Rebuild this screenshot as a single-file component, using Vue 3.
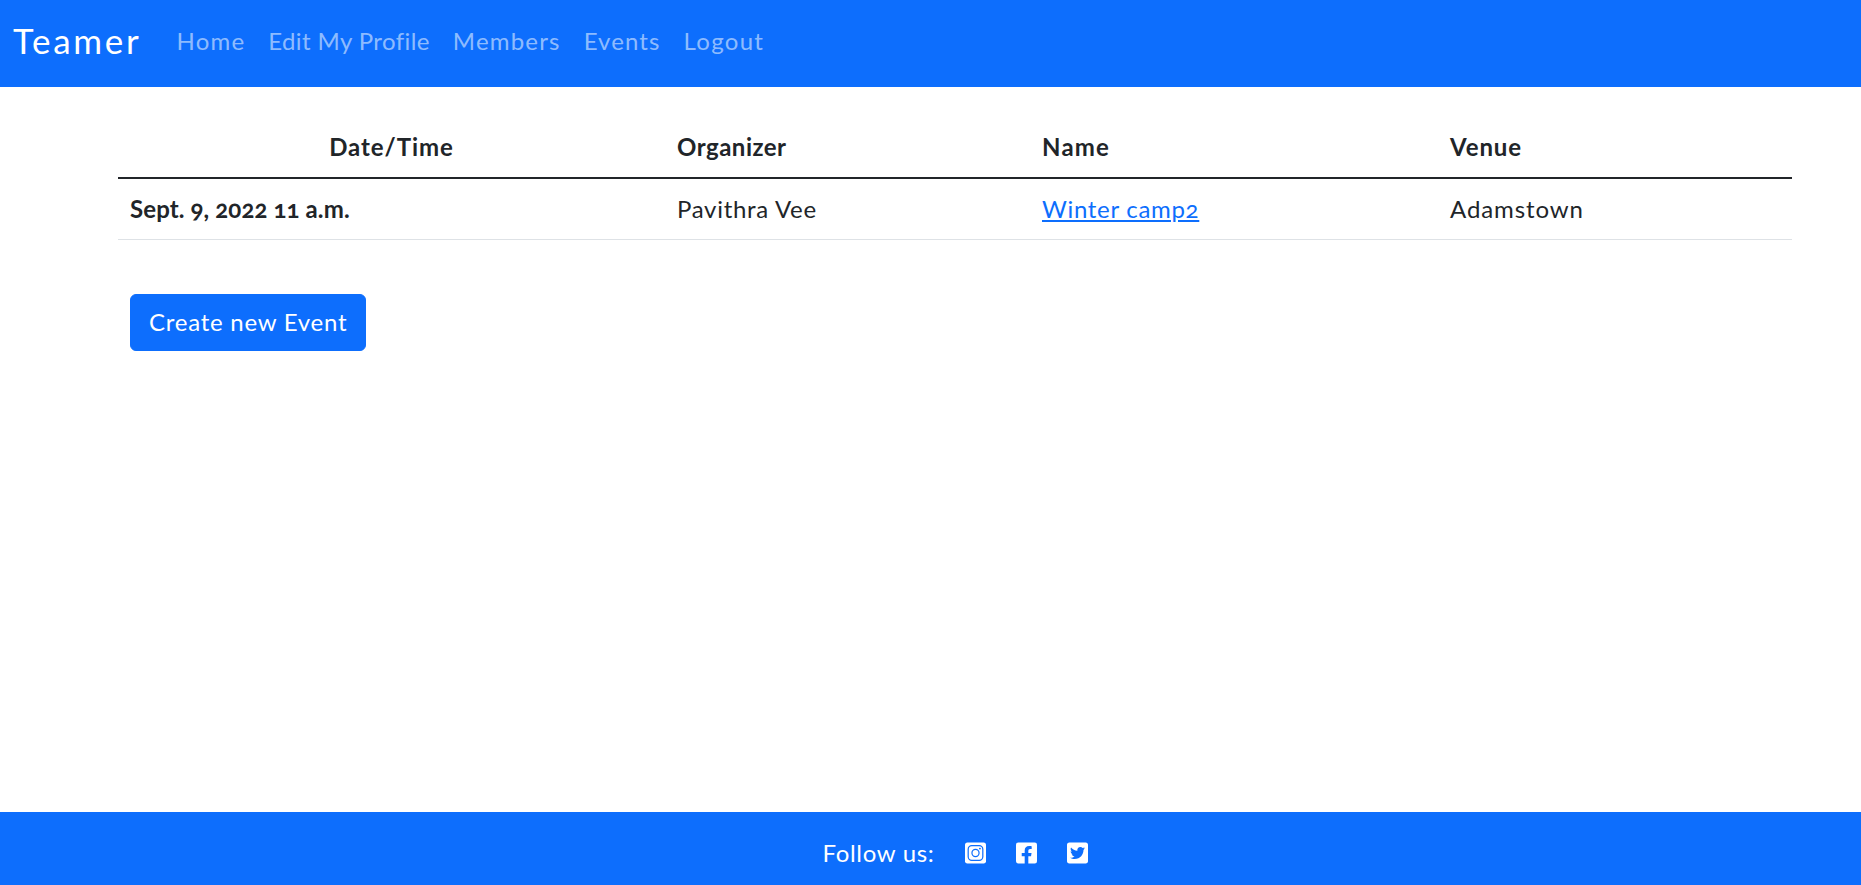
<script setup>
// letter spacing per label evens out the width gap to the original typeface
const links = [
  { label: 'Home', spacing: 1.2 },
  { label: 'Edit My Profile', spacing: 0.4 },
  { label: 'Members', spacing: 1.2 },
  { label: 'Events', spacing: 1.1 },
  { label: 'Logout', spacing: 1.3 }
]
const events = [
  { date: 'Sept. 9, 2022 11 a.m.', organizer: 'Pavithra Vee', name: 'Winter camp2', venue: 'Adamstown' }
]
</script>

<template>
  <div class="page">
    <nav class="navbar">
      <a class="brand" href="#">Teamer</a>
      <ul class="nav-list">
        <li v-for="link in links" :key="link.label">
          <a class="nav-link" href="#" :style="{ letterSpacing: link.spacing + 'px' }">{{ link.label }}</a>
        </li>
      </ul>
    </nav>

    <main class="content">
      <table class="events">
        <colgroup>
          <col class="col-date" />
          <col class="col-org" />
          <col class="col-name" />
          <col />
        </colgroup>
        <thead>
          <tr>
            <th class="center th-date">Date/Time</th>
            <th class="th-org">Organizer</th>
            <th class="th-name">Name</th>
            <th class="th-venue">Venue</th>
          </tr>
        </thead>
        <tbody>
          <tr v-for="event in events" :key="event.name">
            <th class="row-date">{{ event.date }}</th>
            <td>{{ event.organizer }}</td>
            <td><a href="#">{{ event.name }}</a></td>
            <td class="venue">{{ event.venue }}</td>
          </tr>
        </tbody>
      </table>
      <a class="btn" href="#">Create new Event</a>
    </main>

    <footer class="footer">
      <span class="follow">Follow us:</span>
      <a href="#" class="social" aria-label="Instagram">
        <svg viewBox="0 0 448 512" width="21" height="24">
          <path fill="#fff" d="M400 32H48C21.5 32 0 53.5 0 80v352c0 26.5 21.5 48 48 48h352c26.5 0 48-21.5 48-48V80c0-26.5-21.5-48-48-48z" />
          <rect x="68" y="100" width="312" height="312" rx="76" fill="none" stroke="#0d6efd" stroke-width="26" />
          <circle cx="224" cy="256" r="76" fill="none" stroke="#0d6efd" stroke-width="26" />
          <circle cx="318" cy="162" r="20" fill="#0d6efd" />
        </svg>
      </a>
      <a href="#" class="social" aria-label="Facebook">
        <svg viewBox="0 0 448 512" width="21" height="24">
          <path fill="#fff" d="M400 32H48A48 48 0 0 0 0 80v352a48 48 0 0 0 48 48h137.25V327.69h-63V256h63v-54.64c0-62.15 37-96.48 93.67-96.48 27.14 0 55.52 4.84 55.52 4.84v61h-31.27c-30.81 0-40.42 19.12-40.42 38.73V256h68.78l-11 71.69h-57.78V480H400a48 48 0 0 0 48-48V80a48 48 0 0 0-48-48z" />
        </svg>
      </a>
      <a href="#" class="social" aria-label="Twitter">
        <svg viewBox="0 0 448 512" width="21" height="24">
          <path fill="#fff" d="M400 32H48C21.5 32 0 53.5 0 80v352c0 26.5 21.5 48 48 48h352c26.5 0 48-21.5 48-48V80c0-26.5-21.5-48-48-48zm-48.9 158.8c.2 2.8.2 5.7.2 8.5 0 86.7-66 186.6-186.6 186.6-37.2 0-71.7-10.8-100.7-29.4 5.3.6 10.4.8 15.8.8 30.7 0 58.9-10.4 81.4-28-28.8-.6-53-19.5-61.3-45.5 10.1 1.5 19.2 1.5 29.6-1.2-30-6.1-52.5-32.5-52.5-64.4v-.8c8.7 4.9 18.9 7.9 29.6 8.3a65.447 65.447 0 0 1-29.2-54.6c0-12.2 3.2-23.4 8.9-33.1 32.3 39.8 80.8 65.8 135.2 68.6-9.3-44.5 24-80.6 64-80.6 18.9 0 35.9 7.9 47.9 20.7 14.8-2.8 29-8.3 41.6-15.8-4.9 15.2-15.1 28-28.6 36 13.1-1.4 25.8-5 37.6-10.1-8.9 13.1-20.1 24.7-32.9 34z" />
        </svg>
      </a>
    </footer>
  </div>
</template>

<style scoped>
.page {
  min-height: 885px;
  display: flex;
  flex-direction: column;
  font-family: "Lato", "Liberation Sans", sans-serif;
  font-size: 24px;
  line-height: 1.5;
  color: #212529;
  background: #fff;
}

a {
  text-decoration: none;
}

/* top bar */
.navbar {
  height: 87px;
  display: flex;
  align-items: center;
  background: #0d6efd;
  padding: 0 0 6px 13px;
  box-sizing: border-box;
}

.brand {
  font-size: 35px;
  color: #fff;
  margin-right: 35px;
  letter-spacing: 2.7px;
}

.nav-list {
  display: flex;
  gap: 23px;
  list-style: none;
  margin: 0;
  padding: 0;
}

.nav-link {
  color: rgba(255, 255, 255, 0.55);
}

/* table */
.content {
  flex: 1;
  padding: 30px 69px 0 118px;
}

.events {
  width: 100%;
  border-collapse: collapse;
  table-layout: fixed;
}

.col-date {
  width: 547px;
}

.col-org {
  width: 365px;
}

.col-name {
  width: 408px;
}

.events th,
.events td {
  padding: 12px;
  text-align: left;
  font-weight: 700;
  letter-spacing: 0.7px;
  border-bottom: 1px solid #dee2e6;
}

.events td {
  font-weight: 400;
}

.events .center {
  text-align: center;
}

.events thead th {
  border-bottom: 2px solid #212529;
}

.events .th-date {
  letter-spacing: 0.95px;
}

.events .th-org {
  letter-spacing: 0.5px;
}

.events .th-name {
  letter-spacing: 1.2px;
}

.events .th-venue,
.events .venue {
  letter-spacing: 0.9px;
}

.events .row-date {
  letter-spacing: 0.11px;
  font-feature-settings: "onum";
}

.events td a {
  color: #0d6efd;
  text-decoration: underline;
  font-feature-settings: "onum";
}

/* button */
.btn {
  display: inline-block;
  margin: 54px 0 0 12px;
  padding: 9px 18px 10px;
  border: 1px solid #0d6efd;
  border-radius: 6px;
  background: #0d6efd;
  color: #fff;
  letter-spacing: 0.75px;
}

/* bottom bar */
.footer {
  height: 73px;
  display: flex;
  align-items: center;
  justify-content: center;
  gap: 30px;
  background: #0d6efd;
  color: #fff;
  padding: 9px 0 0 49px;
  box-sizing: border-box;
}

.follow {
  letter-spacing: 0.7px;
}

.social {
  display: flex;
}
</style>

<style>
html,
body {
  margin: 0;
}
</style>
